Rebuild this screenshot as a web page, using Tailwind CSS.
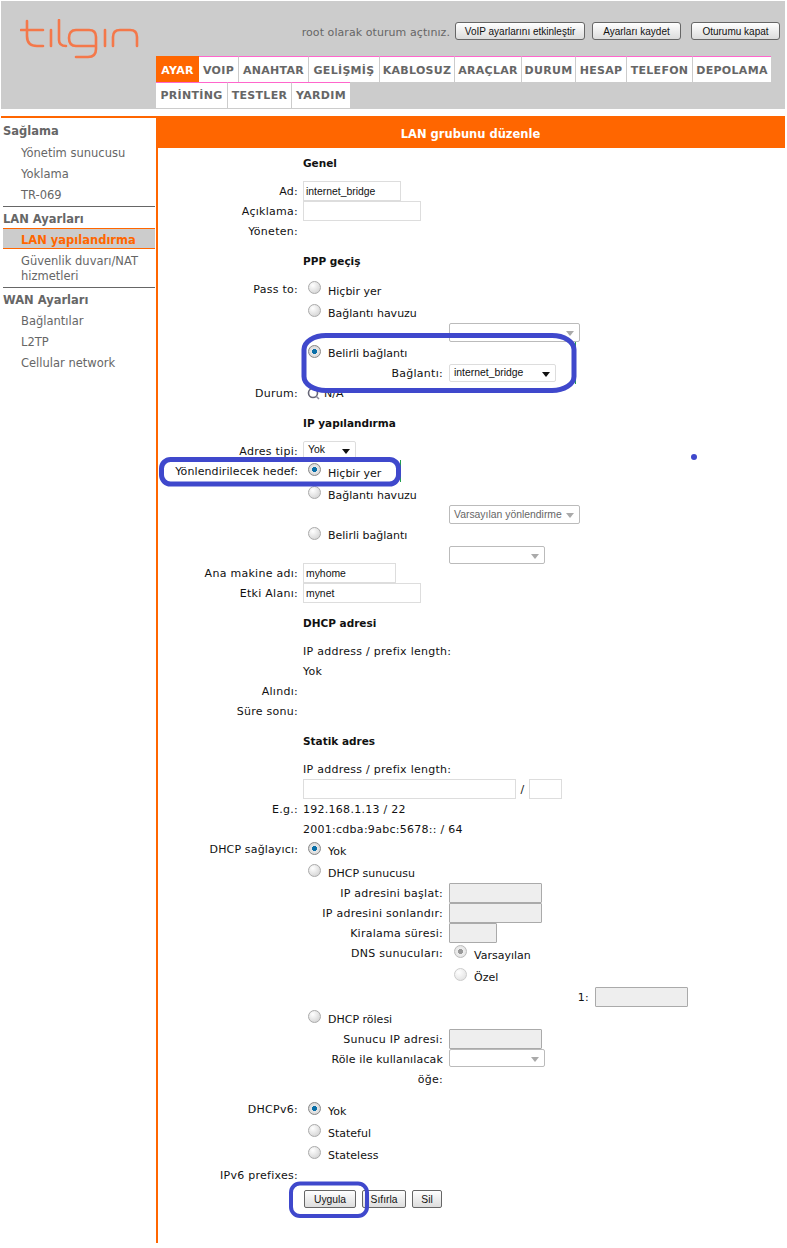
<!DOCTYPE html>
<html lang="tr">
<head>
<meta charset="utf-8">
<script src="https://cdn.jsdelivr.net/npm/@tailwindcss/browser@4"></script>
<title>LAN grubunu düzenle</title>
</head>
<body class="bg-white">
<div class="relative w-[787px] h-[1248px] overflow-hidden pl-px pt-px font-['DejaVu_Sans',sans-serif] text-[11px] text-[#111]">
  <header class="w-[784px] h-[108px] bg-[#cccccc] relative">
    <div class="h-[55px] flex">
      <div class="w-[155px] pl-[19px] pt-[18px]">
        <svg width="120" height="42" viewBox="0 0 120 42" fill="none" stroke="#f4784a" stroke-width="2.600" stroke-linecap="round">
          <path d="M7 2V17Q7 27 17 27H23M1 11H23"/>
          <path d="M31 11V27"/>
          <path d="M39 1V21Q39 27 46 27"/>
          <path d="M76 27H56Q49 27 49 19Q49 11 56 11H69Q76 11 76 18V30Q76 38 68 38H56"/>
          <path d="M85 11V27"/>
          <path d="M93 27V18Q93 11 100 11H110Q117 11 117 18V27"/>
        </svg>
      </div>
      <div class="flex-1 flex items-start justify-end pt-[21px] pr-[5px] font-['Liberation_Sans',sans-serif] text-[10px]">
        <span class="text-[#666] mt-[3px] mr-[5px] font-['DejaVu_Sans',sans-serif] text-[11px] tracking-[0.07px]">root olarak oturum açtınız.</span>
        <button class="h-[18px] w-[130px] whitespace-nowrap rounded-[3px] border border-[#666] bg-gradient-to-b from-white to-[#dcdcdc] leading-[15px]">VoIP ayarlarını etkinleştir</button>
        <button class="h-[18px] w-[89px] ml-[7px] whitespace-nowrap rounded-[3px] border border-[#666] bg-gradient-to-b from-white to-[#dcdcdc] leading-[15px]">Ayarları kaydet</button>
        <button class="h-[18px] w-[89px] ml-[10px] whitespace-nowrap rounded-[3px] border border-[#666] bg-gradient-to-b from-white to-[#dcdcdc] leading-[15px]">Oturumu kapat</button>
      </div>
    </div>
    <nav class="ml-[155px] w-[615px] flex flex-wrap font-bold text-[11px] text-[#666] tracking-[0.3px]">
      <a class="w-[43px] h-[26px] leading-[30px] text-center bg-[#ff6600] text-white">AYAR</a>
      <a class="w-[40px] h-[26px] leading-[28px] text-center bg-white border-t border-t-[#ff66cc] border-r border-r-[#ccc]">VOIP</a>
      <a class="w-[70px] h-[26px] leading-[28px] text-center bg-white border-t border-t-[#ff66cc] border-r border-r-[#ccc]">ANAHTAR</a>
      <a class="w-[71px] h-[26px] leading-[28px] text-center bg-white border-t border-t-[#ff66cc] border-r border-r-[#ccc]">GELİŞMİŞ</a>
      <a class="w-[75px] h-[26px] leading-[28px] text-center bg-white border-t border-t-[#ff66cc] border-r border-r-[#ccc]">KABLOSUZ</a>
      <a class="w-[67px] h-[26px] leading-[28px] text-center bg-white border-t border-t-[#ff66cc] border-r border-r-[#ccc]">ARAÇLAR</a>
      <a class="w-[54px] h-[26px] leading-[28px] text-center bg-white border-t border-t-[#ff66cc] border-r border-r-[#ccc]">DURUM</a>
      <a class="w-[51px] h-[26px] leading-[28px] text-center bg-white border-t border-t-[#ff66cc] border-r border-r-[#ccc]">HESAP</a>
      <a class="w-[66px] h-[26px] leading-[28px] text-center bg-white border-t border-t-[#ff66cc] border-r border-r-[#ccc]">TELEFON</a>
      <a class="w-[78px] h-[26px] leading-[28px] text-center bg-white border-t border-t-[#ff66cc]">DEPOLAMA</a>
      <a class="w-[72px] h-[26px] leading-[26px] text-center bg-white border-t border-t-[#ff66cc] border-r border-r-[#ccc]">PRİNTİNG</a>
      <a class="w-[64px] h-[26px] leading-[26px] text-center bg-white border-t border-t-[#ff66cc] border-r border-r-[#ccc]">TESTLER</a>
      <a class="w-[58px] h-[26px] leading-[26px] text-center bg-white border-t border-t-[#ff66cc]">YARDIM</a>
    </nav>
  </header>

  <div class="mt-[7px] flex w-[784px]">
    <aside class="w-[155px] border-t-2 border-t-[#ff6600] text-[#666] text-[11.5px]">
      <div class="h-[24px] pl-[2px] pt-[5px] font-bold text-[11.5px]">Sağlama</div>
      <div class="h-[21px] pl-[20px] leading-[23px]">Yönetim sunucusu</div>
      <div class="h-[21px] pl-[20px] leading-[23px]">Yoklama</div>
      <div class="h-[21px] pl-[20px] leading-[23px]">TR-069</div>
      <div class="mt-px ml-[2px] mr-px border-t border-t-[#666]"></div>
      <div class="h-[21px] pl-[2px] leading-[25px] font-bold text-[11.5px]">LAN Ayarları</div>
      <div class="ml-[2px] mr-px h-[21px] pl-[18px] leading-[23px] bg-[#cccccc] border-y border-y-[#ff6600] text-[#ff6600] font-bold text-[11.5px]">LAN yapılandırma</div>
      <div class="pl-[20px] pt-[5px] pb-[3px] leading-[15px]">Güvenlik duvarı/NAT<br>hizmetleri</div>
      <div class="ml-[2px] mr-px border-t border-t-[#666]"></div>
      <div class="h-[22px] pl-[2px] leading-[24px] font-bold text-[11.5px]">WAN Ayarları</div>
      <div class="h-[21px] pl-[20px] leading-[23px]">Bağlantılar</div>
      <div class="h-[21px] pl-[20px] leading-[23px]">L2TP</div>
      <div class="h-[21px] pl-[20px] leading-[23px]">Cellular network</div>
    </aside>

    <main class="w-[629px] h-[1127px] border-l-2 border-l-[#ff6600] tracking-[0.27px]">
      <div class="-ml-[2px] h-[32px] bg-[#ff6600] text-white font-bold text-[11.5px] tracking-normal leading-[36px] text-center">LAN grubunu düzenle</div>

      <div class="h-[20px] mt-[5px] pl-[145px] leading-[20px] font-bold text-[10.5px] tracking-normal">Genel</div>
      <div class="h-[20px] mt-[8px] flex"><div class="w-[140px] text-right leading-[22px]">Ad:</div><div class="ml-[5px] w-[98px] h-[20px] border border-[#ddd] bg-white pl-[2px] font-['Liberation_Sans',sans-serif] text-[10.4px] tracking-normal leading-[19px]">internet_bridge</div></div>
      <div class="h-[20px] flex"><div class="w-[140px] text-right leading-[22px]">Açıklama:</div><div class="ml-[5px] w-[118px] h-[20px] border border-[#ddd]"></div></div>
      <div class="h-[20px] flex"><div class="w-[140px] text-right leading-[22px]">Yöneten:</div></div>

      <div class="h-[20px] mt-[10px] pl-[145px] leading-[20px] font-bold text-[10.5px] tracking-normal">PPP geçiş</div>
      <div class="h-[22px] mt-[8px] flex"><div class="w-[140px] text-right leading-[22px]">Pass to:</div><div class="ml-[10px] mt-[2px] w-[13px] h-[13px] rounded-full border border-[#aaa] bg-[radial-gradient(circle_at_35%_30%,#fff,#ccc)]"></div><div class="ml-[7px] leading-[26px] tracking-normal">Hiçbir yer</div></div>
      <div class="h-[22px] flex"><div class="ml-[150px] mt-[3px] w-[13px] h-[13px] rounded-full border border-[#aaa] bg-[radial-gradient(circle_at_35%_30%,#fff,#ccc)]"></div><div class="ml-[7px] leading-[26px] tracking-normal">Bağlantı havuzu</div></div>
      <div class="h-[19px] pl-[291px]"><div class="w-[131px] h-[19px] border border-[#bbb] rounded-[2px] relative"><svg class="absolute right-[4px] top-[7px]" width="9" height="5"><path d="M0 0H8L4 5Z" fill="#aaa"/></svg></div></div>
      <div class="h-[22px] flex"><div class="ml-[150px] mt-[3px] w-[13px] h-[13px] rounded-full border border-[#888] bg-[radial-gradient(circle,#0a6fa8_0,#0a6fa8_30%,#e8e8e8_35%,#ccc_100%)]"></div><div class="ml-[7px] leading-[24px] tracking-normal">Belirli bağlantı</div></div>
      <div class="h-[19px] flex"><div class="w-[285px] text-right leading-[20px]">Bağlantı:</div><div class="ml-[6px] w-[107px] h-[18px] border border-[#ddd] rounded-[2px] pl-[4px] font-['Liberation_Sans',sans-serif] text-[10.4px] tracking-normal leading-[16px] relative">internet_bridge<svg class="absolute right-[4px] top-[7px]" width="9" height="5"><path d="M0 0H8L4 5Z" fill="#111"/></svg></div></div>
      <div class="h-[20px] flex"><div class="w-[140px] text-right leading-[22px]">Durum:</div><svg class="ml-[9px] mt-[4px]" width="13" height="13" viewBox="0 0 13 13" fill="none"><circle cx="6" cy="6" r="4.500" stroke="#667" stroke-width="1.600"/><path d="M9 9l3 3" stroke="#889" stroke-width="1.500"/></svg><div class="leading-[22px] ml-[4px] tracking-normal">N/A</div></div>

      <div class="h-[20px] mt-[10px] pl-[145px] leading-[20px] font-bold text-[10.5px] tracking-normal">IP yapılandırma</div>
      <div class="h-[20px] mt-[8px] flex"><div class="w-[140px] text-right leading-[22px]">Adres tipi:</div><div class="ml-[5px] w-[53px] h-[19px] border border-[#ddd] rounded-[2px] pl-[4px] font-['Liberation_Sans',sans-serif] text-[10.4px] tracking-normal leading-[15px] relative">Yok<svg class="absolute right-[4px] top-[7px]" width="9" height="5"><path d="M0 0H8L4 5Z" fill="#111"/></svg></div></div>
      <div class="h-[22px] flex"><div class="w-[140px] text-right leading-[22px] tracking-[0.1px]">Yönlendirilecek hedef:</div><div class="ml-[10px] mt-[2px] w-[13px] h-[13px] rounded-full border border-[#888] bg-[radial-gradient(circle,#0a6fa8_0,#0a6fa8_30%,#e8e8e8_35%,#ccc_100%)]"></div><div class="ml-[7px] leading-[26px] tracking-normal">Hiçbir yer</div></div>
      <div class="h-[22px] flex"><div class="ml-[150px] mt-[3px] w-[13px] h-[13px] rounded-full border border-[#aaa] bg-[radial-gradient(circle_at_35%_30%,#fff,#ccc)]"></div><div class="ml-[7px] leading-[26px] tracking-normal">Bağlantı havuzu</div></div>
      <div class="h-[19px] pl-[291px]"><div class="w-[131px] h-[19px] border border-[#bbb] rounded-[2px] pl-[4px] text-[#666] font-['Liberation_Sans',sans-serif] text-[10.4px] tracking-normal leading-[17px] relative">Varsayılan yönlendirme<svg class="absolute right-[4px] top-[7px]" width="9" height="5"><path d="M0 0H8L4 5Z" fill="#aaa"/></svg></div></div>
      <div class="h-[22px] flex"><div class="ml-[150px] mt-[3px] w-[13px] h-[13px] rounded-full border border-[#aaa] bg-[radial-gradient(circle_at_35%_30%,#fff,#ccc)]"></div><div class="ml-[7px] leading-[24px] tracking-normal">Belirli bağlantı</div></div>
      <div class="h-[17px] pl-[291px]"><div class="w-[96px] h-[18px] border border-[#bbb] rounded-[2px] relative"><svg class="absolute right-[4px] top-[7px]" width="9" height="5"><path d="M0 0H8L4 5Z" fill="#aaa"/></svg></div></div>
      <div class="h-[20px] flex"><div class="w-[140px] text-right leading-[22px]">Ana makine adı:</div><div class="ml-[5px] w-[93px] h-[20px] border border-[#ddd] pl-[2px] font-['Liberation_Sans',sans-serif] text-[10.4px] tracking-normal leading-[19px]">myhome</div></div>
      <div class="h-[20px] flex"><div class="w-[140px] text-right leading-[22px]">Etki Alanı:</div><div class="ml-[5px] w-[118px] h-[20px] border border-[#ddd] pl-[2px] font-['Liberation_Sans',sans-serif] text-[10.4px] tracking-normal leading-[19px]">mynet</div></div>

      <div class="h-[20px] mt-[10px] pl-[145px] leading-[20px] font-bold text-[10.5px] tracking-normal">DHCP adresi</div>
      <div class="h-[20px] mt-[8px] pl-[145px] leading-[22px]">IP address / prefix length:</div>
      <div class="h-[20px] pl-[145px] leading-[22px]">Yok</div>
      <div class="h-[20px] flex"><div class="w-[140px] text-right leading-[22px]">Alındı:</div></div>
      <div class="h-[20px] flex"><div class="w-[140px] text-right leading-[22px]">Süre sonu:</div></div>

      <div class="h-[20px] mt-[10px] pl-[145px] leading-[20px] font-bold text-[10.5px] tracking-normal">Statik adres</div>
      <div class="h-[20px] mt-[8px] pl-[145px] leading-[22px]">IP address / prefix length:</div>
      <div class="h-[20px] flex pl-[145px]"><div class="w-[213px] h-[20px] border border-[#ddd]"></div><div class="w-[13px] text-center leading-[22px]">/</div><div class="w-[33px] h-[20px] border border-[#ddd]"></div></div>
      <div class="h-[20px] flex"><div class="w-[140px] text-right leading-[22px]">E.g.:</div><div class="ml-[5px] leading-[22px]">192.168.1.13 / 22</div></div>
      <div class="h-[20px] pl-[145px] leading-[22px]">2001:cdba:9abc:5678:: / 64</div>
      <div class="h-[22px] flex"><div class="w-[140px] text-right leading-[22px] tracking-[0.15px]">DHCP sağlayıcı:</div><div class="ml-[10px] mt-[3px] w-[13px] h-[13px] rounded-full border border-[#888] bg-[radial-gradient(circle,#0a6fa8_0,#0a6fa8_30%,#e8e8e8_35%,#ccc_100%)]"></div><div class="ml-[7px] leading-[26px] tracking-normal">Yok</div></div>
      <div class="h-[22px] flex"><div class="ml-[150px] mt-[3px] w-[13px] h-[13px] rounded-full border border-[#aaa] bg-[radial-gradient(circle_at_35%_30%,#fff,#ccc)]"></div><div class="ml-[7px] leading-[26px] tracking-normal">DHCP sunucusu</div></div>
      <div class="h-[20px] flex"><div class="w-[285px] text-right leading-[22px]">IP adresini başlat:</div><div class="ml-[6px] w-[93px] h-[20px] border border-[#aaa] bg-[#eeeeee] rounded-[1px]"></div></div>
      <div class="h-[20px] flex"><div class="w-[285px] text-right leading-[22px]">IP adresini sonlandır:</div><div class="ml-[6px] w-[93px] h-[20px] border border-[#aaa] bg-[#eeeeee] rounded-[1px]"></div></div>
      <div class="h-[20px] flex"><div class="w-[285px] text-right leading-[22px]">Kiralama süresi:</div><div class="ml-[6px] w-[48px] h-[20px] border border-[#aaa] bg-[#eeeeee] rounded-[1px]"></div></div>
      <div class="h-[22px] flex"><div class="w-[285px] text-right leading-[22px]">DNS sunucuları:</div><div class="ml-[11px] mt-[2px] w-[13px] h-[13px] rounded-full border border-[#bbb] bg-[radial-gradient(circle,#999_0,#999_30%,#eee_35%,#ddd_100%)]"></div><div class="ml-[7px] leading-[26px] tracking-normal">Varsayılan</div></div>
      <div class="h-[22px] flex"><div class="ml-[296px] mt-[3px] w-[13px] h-[13px] rounded-full border border-[#ccc] bg-[radial-gradient(circle_at_35%_30%,#fff,#ddd)]"></div><div class="ml-[7px] leading-[26px] tracking-normal">Özel</div></div>
      <div class="h-[20px] flex"><div class="w-[431px] text-right leading-[22px]">1:</div><div class="ml-[6px] w-[93px] h-[20px] border border-[#aaa] bg-[#eeeeee] rounded-[1px]"></div></div>
      <div class="h-[22px] flex"><div class="ml-[150px] mt-[3px] w-[13px] h-[13px] rounded-full border border-[#aaa] bg-[radial-gradient(circle_at_35%_30%,#fff,#ccc)]"></div><div class="ml-[7px] leading-[26px] tracking-normal">DHCP rölesi</div></div>
      <div class="h-[20px] flex"><div class="w-[285px] text-right leading-[22px]">Sunucu IP adresi:</div><div class="ml-[6px] w-[93px] h-[20px] border border-[#aaa] bg-[#eeeeee] rounded-[1px]"></div></div>
      <div class="h-[20px] flex"><div class="w-[285px] text-right leading-[22px] tracking-[0.15px]">Röle ile kullanılacak</div><div class="ml-[6px] w-[96px] h-[18px] border border-[#bbb] rounded-[2px] relative"><svg class="absolute right-[4px] top-[7px]" width="9" height="5"><path d="M0 0H8L4 5Z" fill="#aaa"/></svg></div></div>
      <div class="h-[20px] flex"><div class="w-[285px] text-right leading-[22px]">öğe:</div></div>
      <div class="h-[22px] mt-[10px] flex"><div class="w-[140px] text-right leading-[22px]">DHCPv6:</div><div class="ml-[10px] mt-[3px] w-[13px] h-[13px] rounded-full border border-[#888] bg-[radial-gradient(circle,#0a6fa8_0,#0a6fa8_30%,#e8e8e8_35%,#ccc_100%)]"></div><div class="ml-[7px] leading-[26px] tracking-normal">Yok</div></div>
      <div class="h-[22px] flex"><div class="ml-[150px] mt-[3px] w-[13px] h-[13px] rounded-full border border-[#aaa] bg-[radial-gradient(circle_at_35%_30%,#fff,#ccc)]"></div><div class="ml-[7px] leading-[26px] tracking-normal">Stateful</div></div>
      <div class="h-[22px] flex"><div class="ml-[150px] mt-[3px] w-[13px] h-[13px] rounded-full border border-[#aaa] bg-[radial-gradient(circle_at_35%_30%,#fff,#ccc)]"></div><div class="ml-[7px] leading-[26px] tracking-normal">Stateless</div></div>
      <div class="h-[20px] flex"><div class="w-[140px] text-right leading-[22px]">IPv6 prefixes:</div></div>
      <div class="mt-[5px] flex pl-[146px] font-['Liberation_Sans',sans-serif] text-[10.3px] tracking-normal">
        <button class="w-[52px] h-[18px] rounded-[2px] border border-[#666] bg-gradient-to-b from-white to-[#ddd] leading-[15px]">Uygula</button>
        <button class="w-[44px] h-[18px] ml-[6px] rounded-[2px] border border-[#666] bg-gradient-to-b from-white to-[#ddd] leading-[15px]">Sıfırla</button>
        <button class="w-[30px] h-[18px] ml-[6px] rounded-[2px] border border-[#666] bg-gradient-to-b from-white to-[#ddd] leading-[15px]">Sil</button>
      </div>
    </main>
  </div>

  <svg class="absolute left-0 top-0 pointer-events-none" width="787" height="1248" fill="none">
    <path d="M575.500 342V384" stroke="#22a050" stroke-width="1"/>
    <path d="M400.500 460V482" stroke="#22a050" stroke-width="1"/>
    <rect x="304" y="335.500" width="270" height="55" rx="22" ry="14" stroke="#3f48cc" stroke-width="5"/>
    <rect x="161.500" y="459.500" width="237" height="24.500" rx="9" stroke="#3f48cc" stroke-width="5"/>
    <rect x="291" y="1183.500" width="76" height="32.500" rx="9" stroke="#3f48cc" stroke-width="4"/>
    <circle cx="694" cy="457" r="3" fill="#3f48cc"/>
  </svg>
</div>
</body>
</html>
